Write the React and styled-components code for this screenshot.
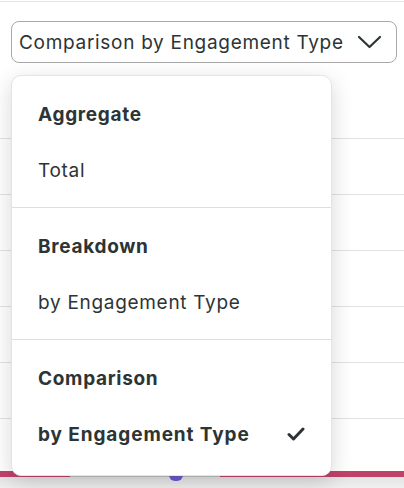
import React from "react";
import styled, { createGlobalStyle } from "styled-components";

const GlobalStyle = createGlobalStyle`
  body {
    margin: 0;
    background: #ffffff;
    font-family: Inter, "Open Sans", "Liberation Sans", sans-serif;
    color: #2c3435;
  }
`;

const Page = styled.div`
  position: relative;
  width: 404px;
  height: 488px;
  overflow: hidden;
  background: #ffffff;
`;

const TopRule = styled.div`
  height: 1px;
  margin-top: 1px;
  background: #e6e6e6;
`;

const SelectWrap = styled.div`
  padding: 19px 7px 0 11px;
`;

const SelectButton = styled.div`
  height: 40px;
  border: 1px solid #a8a8a8;
  border-radius: 8px;
  display: flex;
  align-items: center;
  justify-content: space-between;
  padding: 0 14px 0 7px;
  font-size: 19px;
  letter-spacing: 0.7px;
  color: #2c3435;
`;

const Chart = styled.div`
  margin-top: 20px;
  display: flex;
  flex-direction: column;
`;

const GridRow = styled.div`
  height: 55px;
  border-bottom: 1px solid #e2e2e2;
`;

const BarRow = styled.div`
  margin-top: 52px;
  height: 6px;
  display: flex;
`;

const BarPiece = styled.div`
  position: relative;
  width: ${(p) => p.w}px;
  background: ${(p) => (p.gap ? "#c2c2c2" : "#c0426a")};
`;

const Dot = styled.span`
  position: absolute;
  left: 99px;
  top: 4px;
  width: 14px;
  height: 6px;
  border-radius: 0 0 7px 7px;
  background: #6a5acd;
`;

const Below = styled.div`
  height: 11px;
  background: linear-gradient(#e4e4e4, #efefef);
`;

const Menu = styled.div`
  position: absolute;
  top: 75px;
  left: 11px;
  width: 321px;
  background: #ffffff;
  border-radius: 10px;
  border: 1px solid #e4e4e4;
  box-sizing: border-box;
  box-shadow: 0 6px 22px rgba(0, 0, 0, 0.16);
  z-index: 2;
`;

const Section = styled.div`
  padding: 10px 0 ${(p) => (p.last ? 13 : 9)}px;
  border-top: ${(p) => (p.first ? "none" : "1px solid #dedede")};
`;

const Row = styled.div`
  height: 56px;
  display: flex;
  align-items: center;
  justify-content: space-between;
  padding: 0 26px 0 26px;
  font-size: 19px;
  letter-spacing: ${(p) => (p.selected ? "0.9px" : "0.7px")};
  font-weight: ${(p) => (p.bold ? 700 : 400)};
  color: #2c3435;
`;

const Chevron = () => (
  <svg width="25" height="14" viewBox="0 0 25 14">
    <polyline
      points="2,2 12.5,12 23,2"
      fill="none"
      stroke="#2c3435"
      strokeWidth="2.2"
      strokeLinecap="round"
      strokeLinejoin="round"
    />
  </svg>
);

const Check = () => (
  <svg width="18" height="14" viewBox="0 0 18 14">
    <polyline
      points="2,7.5 6.5,12 16,2"
      fill="none"
      stroke="#2c3435"
      strokeWidth="3"
      strokeLinecap="round"
      strokeLinejoin="round"
    />
  </svg>
);

const sections = [
  { title: "Aggregate", item: "Total" },
  { title: "Breakdown", item: "by Engagement Type" },
  { title: "Comparison", item: "by Engagement Type", selected: true },
];

export default function App() {
  return (
    <Page>
      <GlobalStyle />
      <TopRule />
      <SelectWrap>
        <SelectButton>
          <span>Comparison by Engagement Type</span>
          <Chevron />
        </SelectButton>
      </SelectWrap>
      <Chart>
        {[0, 1, 2, 3, 4, 5].map((i) => (
          <GridRow key={i} />
        ))}
      </Chart>
      <BarRow>
        <BarPiece w={70} />
        <BarPiece w={150} gap>
          <Dot />
        </BarPiece>
        <BarPiece w={184} />
      </BarRow>
      <Below />

      <Menu>
        {sections.map((s, i) => (
          <Section
            key={s.title}
            first={i === 0}
            last={i === sections.length - 1}
          >
            <Row bold>{s.title}</Row>
            <Row bold={s.selected} selected={s.selected}>
              <span>{s.item}</span>
              {s.selected && <Check />}
            </Row>
          </Section>
        ))}
      </Menu>
    </Page>
  );
}
